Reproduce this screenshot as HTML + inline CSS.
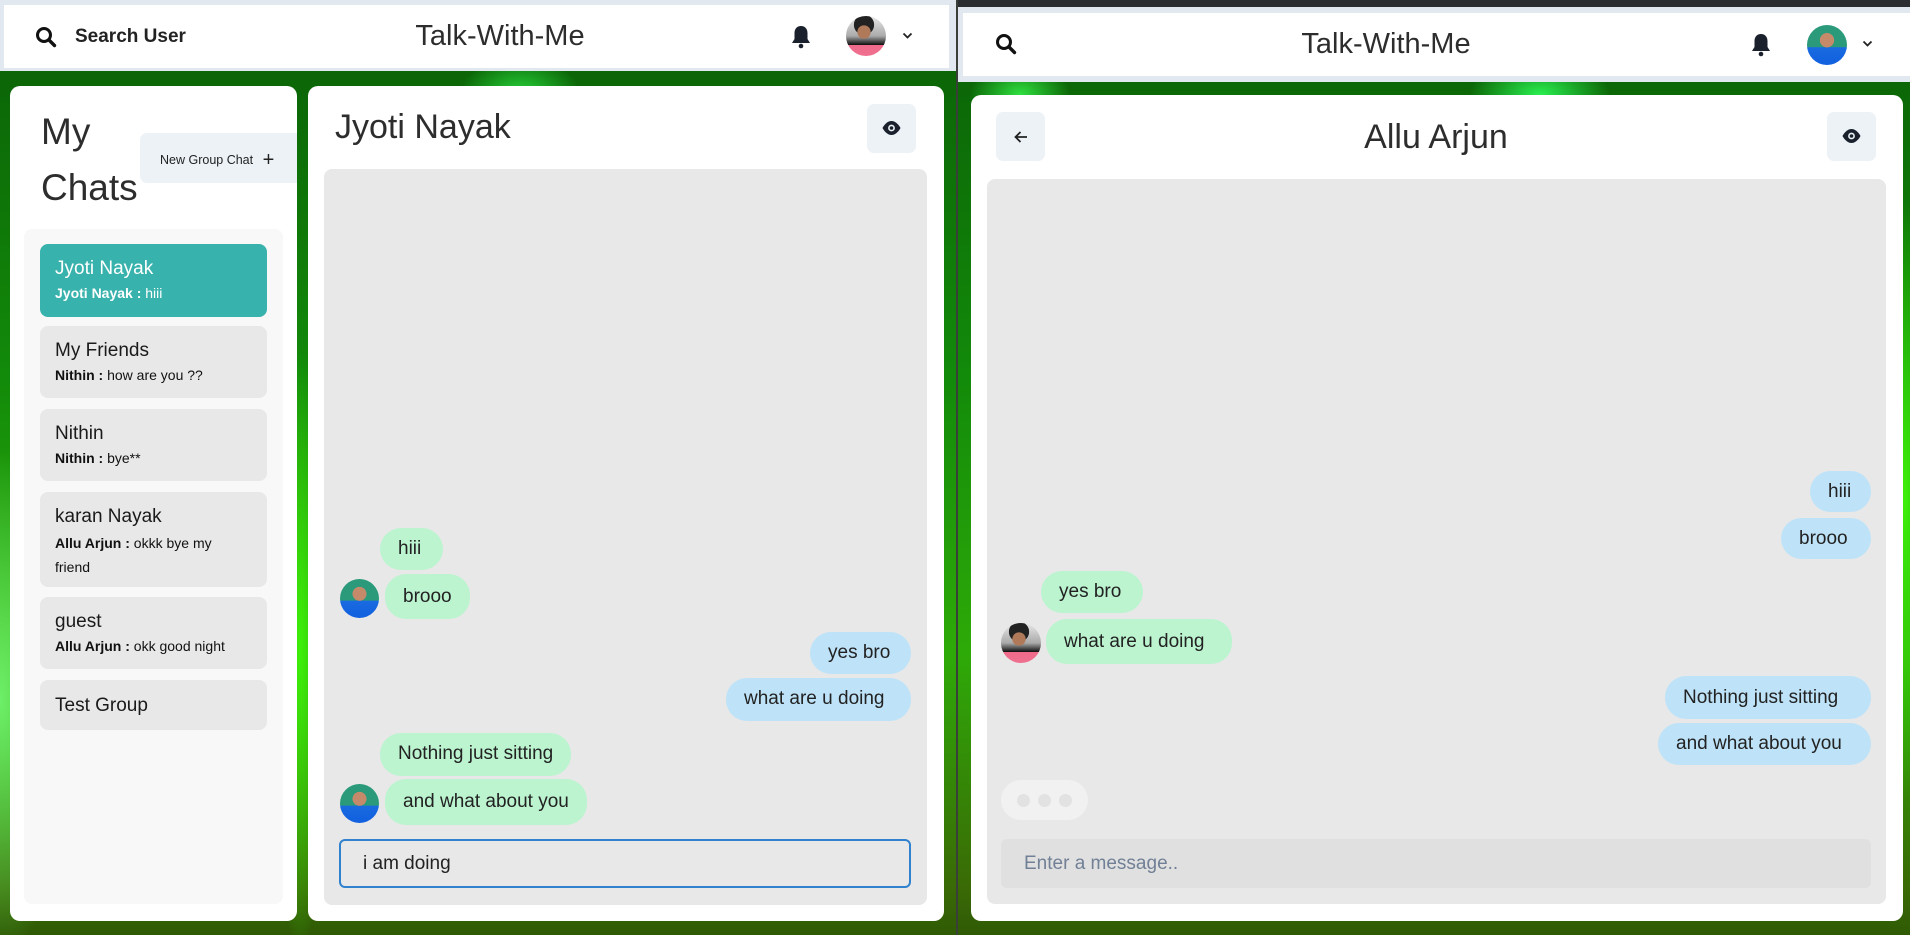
<!DOCTYPE html>
<html><head><meta charset="utf-8">
<style>
*{box-sizing:border-box;margin:0;padding:0}
body{width:1910px;height:935px;overflow:hidden;position:relative;font-family:"Liberation Sans",sans-serif;color:#1a202c;
background:
radial-gradient(ellipse 60px 40px at 520px 95px,#27d43a 0%,rgba(39,212,58,0) 100%),
radial-gradient(ellipse 50px 35px at 1020px 95px,#30e040 0%,rgba(48,224,64,0) 100%),
radial-gradient(ellipse 70px 40px at 1540px 95px,#2af050 0%,rgba(42,240,80,0) 100%),
radial-gradient(ellipse 80px 250px at 0px 700px,#6ef06a 0%,rgba(110,240,106,0) 100%),
radial-gradient(ellipse 30px 300px at 300px 650px,#3ef00a 0%,rgba(62,240,10,0) 100%),
radial-gradient(ellipse 30px 300px at 1905px 500px,#3ef00a 0%,rgba(62,240,10,0) 100%),
linear-gradient(180deg,#0a5d06 0%,#128a0a 40%,#2eaa08 70%,#3a6a06 95%,#2f5a05 100%);}
.abs{position:absolute}
.band{background:#e2e8f0}
.white{background:#fff}
.card{background:#fff;border-radius:10px}
.title{font-weight:300;color:#2d2d2d}
.btn{background:#edf2f7;border-radius:7px}
.item{position:absolute;left:40px;width:227px;background:#e8e8e8;border-radius:8px;padding:14px 15px 0 15px}
.item .t{font-size:19px;color:#1a1a1a;line-height:22px}
.item .s{font-size:14px;line-height:20px;margin-top:3px;color:#111}
.item .s b{font-weight:bold}
.b{position:absolute;height:42px;border-radius:21px;font-size:19px;line-height:42px;padding:0 18px;color:#222;white-space:nowrap}
.g{background:#bcf4d0}
.bl{background:#bee3f8}
.av{position:absolute;width:39px;height:39px;border-radius:50%;overflow:hidden;background:radial-gradient(circle at 50% 38%,#c48a6a 0 22%,transparent 23%),linear-gradient(180deg,#2a9a7a 0%,#2a9a7a 55%,#1a6ae0 56%,#1060e0 100%)}
.av2{position:absolute;border-radius:50%;overflow:hidden;background:radial-gradient(circle at 45% 40%,#b07a5a 0 20%,transparent 21%),radial-gradient(circle at 45% 22%,#222 0 26%,transparent 27%),linear-gradient(180deg,#e8e8e8 0%,#aaa 50%,#111 72%,#f06a8a 73%,#ef7090 100%)}
</style></head><body>
<!-- LEFT -->
<div class="abs band" style="left:0;top:0;width:956px;height:71px"></div>
<div class="abs white" style="left:4px;top:5px;width:945px;height:63px"></div>
<svg class="abs" style="left:35px;top:26px" width="22" height="22" viewBox="0 0 22 22"><circle cx="9" cy="9" r="6.5" fill="none" stroke="#111" stroke-width="3"/><path d="M14 14l5.5 5.5" stroke="#111" stroke-width="3.4" stroke-linecap="round"/></svg>
<div class="abs" style="left:75px;top:26px;font-size:19px;font-weight:bold;color:#222">Search User</div>
<div class="abs title" style="left:380px;top:20px;width:240px;text-align:center;font-size:29px">Talk-With-Me</div>
<svg class="abs" style="left:791px;top:24px" width="20" height="26" viewBox="0 0 20 26"><path d="M10 2c-4 0-6.5 3-6.5 7v6L1 19h18l-2.5-4V9C16.5 5 14 2 10 2z" fill="#1a202c"/><circle cx="10" cy="22" r="2.3" fill="#1a202c"/></svg>
<div class="av2" style="left:846px;top:16px;width:40px;height:40px"></div>
<svg class="abs" style="left:902px;top:32px" width="11" height="8" viewBox="0 0 11 8"><path d="M1.5 1.5l4 4 4-4" fill="none" stroke="#222" stroke-width="1.8"/></svg>

<div class="abs card" style="left:10px;top:86px;width:287px;height:835px"></div>
<div class="abs title" style="left:41px;top:104px;font-size:37px;line-height:56px">My<br>Chats</div>
<div class="abs btn" style="left:140px;top:133px;width:157px;height:50px;border-radius:7px 0 0 7px;font-size:12.5px;line-height:50px;padding-left:20px;color:#222">New Group Chat <span style="font-size:20px;position:relative;top:2px;margin-left:6px">+</span></div>
<div class="abs" style="left:24px;top:229px;width:259px;height:675px;background:#f8f8f8;border-radius:8px"></div>
<div class="item" style="top:244px;height:73px;background:#38b2ac"><div class="t" style="color:#fff">Jyoti Nayak</div><div class="s" style="color:#fff"><b>Jyoti Nayak :</b> hiii</div></div>
<div class="item" style="top:326px;height:72px"><div class="t">My Friends</div><div class="s"><b>Nithin :</b> how are you ??</div></div>
<div class="item" style="top:409px;height:72px"><div class="t">Nithin</div><div class="s"><b>Nithin :</b> bye**</div></div>
<div class="item" style="top:492px;height:95px"><div class="t">karan Nayak</div><div class="s" style="width:175px;line-height:24px"><b>Allu Arjun :</b> okkk bye my friend</div></div>
<div class="item" style="top:597px;height:72px"><div class="t">guest</div><div class="s"><b>Allu Arjun :</b> okk good night</div></div>
<div class="item" style="top:680px;height:50px"><div class="t" style="margin-top:1px">Test Group</div></div>

<div class="abs card" style="left:308px;top:86px;width:636px;height:835px"></div>
<div class="abs title" style="left:335px;top:108px;font-size:34px">Jyoti Nayak</div>
<div class="abs btn" style="left:867px;top:104px;width:49px;height:49px"></div>
<svg class="abs" style="left:881px;top:120px" width="21" height="16" viewBox="0 0 21 16"><path d="M10.5 1C5 1 1.5 8 1.5 8s3.5 7 9 7 9-7 9-7-3.5-7-9-7z" fill="#1a202c"/><circle cx="10.5" cy="8" r="3.4" fill="#edf2f7"/><circle cx="10.5" cy="8" r="1.8" fill="#1a202c"/></svg>
<div class="abs" style="left:324px;top:169px;width:603px;height:736px;background:#e8e8e8;border-radius:8px"></div>
<div class="b g" style="left:380px;top:528px;width:63px">hiii</div>
<div class="b g" style="left:385px;top:574px;height:45px;line-height:45px">brooo</div>
<div class="av" style="left:340px;top:579px"></div>
<div class="b bl" style="left:810px;top:632px;width:101px">yes bro</div>
<div class="b bl" style="left:726px;top:678px;width:185px;height:43px">what are u doing</div>
<div class="b g" style="left:380px;top:733px;height:43px">Nothing just sitting</div>
<div class="b g" style="left:385px;top:779px;height:46px;line-height:46px">and what about you</div>
<div class="av" style="left:340px;top:784px"></div>
<div class="abs" style="left:339px;top:839px;width:572px;height:49px;border:2px solid #3182ce;border-radius:6px;font-size:19px;line-height:45px;padding-left:22px;color:#222">i am doing</div>

<!-- DIVIDER -->
<div class="abs" style="left:956px;top:0;width:2px;height:935px;background:#3a3f3a"></div>

<!-- RIGHT -->
<div class="abs" style="left:958px;top:0;width:952px;height:7px;background:#2b2d31"></div>
<div class="abs band" style="left:958px;top:7px;width:952px;height:75px"></div>
<div class="abs white" style="left:963px;top:13px;width:947px;height:63px"></div>
<svg class="abs" style="left:995px;top:33px" width="22" height="22" viewBox="0 0 22 22"><circle cx="9" cy="9" r="6.5" fill="none" stroke="#111" stroke-width="3"/><path d="M14 14l5.5 5.5" stroke="#111" stroke-width="3.4" stroke-linecap="round"/></svg>
<div class="abs title" style="left:1266px;top:28px;width:240px;text-align:center;font-size:29px">Talk-With-Me</div>
<svg class="abs" style="left:1751px;top:32px" width="20" height="26" viewBox="0 0 20 26"><path d="M10 2c-4 0-6.5 3-6.5 7v6L1 19h18l-2.5-4V9C16.5 5 14 2 10 2z" fill="#1a202c"/><circle cx="10" cy="22" r="2.3" fill="#1a202c"/></svg>
<div class="av" style="left:1807px;top:25px;width:40px;height:40px"></div>
<svg class="abs" style="left:1862px;top:40px" width="11" height="8" viewBox="0 0 11 8"><path d="M1.5 1.5l4 4 4-4" fill="none" stroke="#222" stroke-width="1.8"/></svg>

<div class="abs card" style="left:971px;top:95px;width:932px;height:826px"></div>
<div class="abs btn" style="left:996px;top:112px;width:49px;height:49px"></div>
<svg class="abs" style="left:1013px;top:129px" width="16" height="16" viewBox="0 0 16 16"><path d="M14 8H2.5M7.5 3L2.5 8l5 5" fill="none" stroke="#222" stroke-width="1.8"/></svg>
<div class="abs title" style="left:1286px;top:118px;width:300px;text-align:center;font-size:34px">Allu Arjun</div>
<div class="abs btn" style="left:1827px;top:112px;width:49px;height:49px"></div>
<svg class="abs" style="left:1841px;top:128px" width="21" height="16" viewBox="0 0 21 16"><path d="M10.5 1C5 1 1.5 8 1.5 8s3.5 7 9 7 9-7 9-7-3.5-7-9-7z" fill="#1a202c"/><circle cx="10.5" cy="8" r="3.4" fill="#edf2f7"/><circle cx="10.5" cy="8" r="1.8" fill="#1a202c"/></svg>
<div class="abs" style="left:987px;top:179px;width:899px;height:725px;background:#e8e8e8;border-radius:8px"></div>
<div class="b bl" style="left:1810px;top:471px;width:61px;height:41px;line-height:41px">hiii</div>
<div class="b bl" style="left:1781px;top:518px;width:90px;height:41px;line-height:41px">brooo</div>
<div class="b g" style="left:1041px;top:571px;width:102px">yes bro</div>
<div class="b g" style="left:1046px;top:619px;width:186px;height:45px;line-height:45px">what are u doing</div>
<div class="av2" style="left:1001px;top:623px;width:40px;height:40px"></div>
<div class="b bl" style="left:1665px;top:676px;width:206px;height:43px;line-height:43px">Nothing just sitting</div>
<div class="b bl" style="left:1658px;top:723px;width:213px">and what about you</div>
<div class="abs" style="left:1001px;top:780px;width:87px;height:40px;border-radius:20px;background:#f1f1f1"></div>
<div class="abs" style="left:1017px;top:794px;width:13px;height:13px;border-radius:50%;background:#e2e2e2"></div>
<div class="abs" style="left:1038px;top:794px;width:13px;height:13px;border-radius:50%;background:#e2e2e2"></div>
<div class="abs" style="left:1059px;top:794px;width:13px;height:13px;border-radius:50%;background:#e2e2e2"></div>
<div class="abs" style="left:1001px;top:839px;width:870px;height:49px;background:#e0e0e0;border-radius:6px;font-size:19px;line-height:49px;padding-left:23px;color:#718096">Enter a message..</div>
</body></html>
